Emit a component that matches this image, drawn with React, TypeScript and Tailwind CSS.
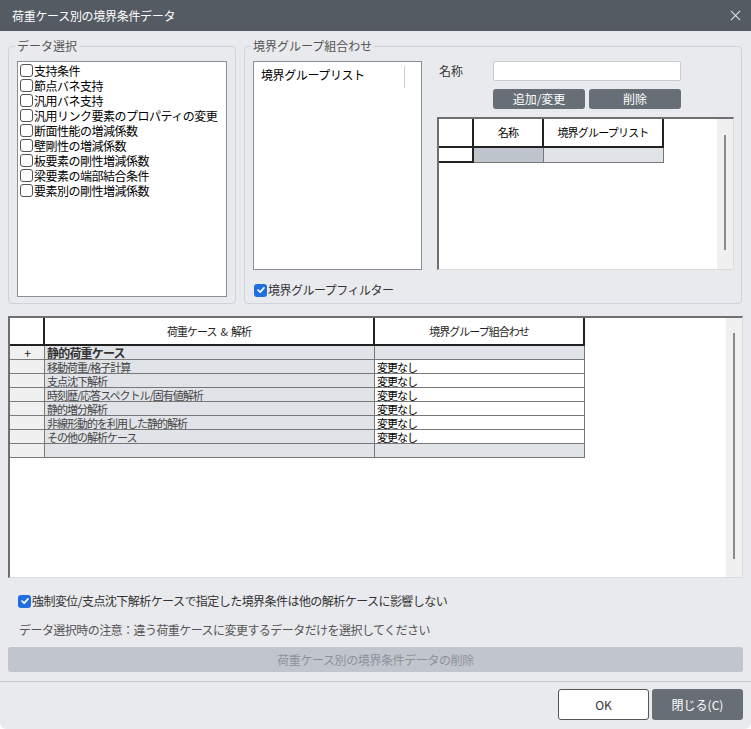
import type { ReactNode } from 'react'

const dataItems = [
  '支持条件',
  '節点バネ支持',
  '汎用バネ支持',
  '汎用リンク要素のプロパティの変更',
  '断面性能の増減係数',
  '壁剛性の増減係数',
  '板要素の剛性増減係数',
  '梁要素の端部結合条件',
  '要素別の剛性増減係数',
]

const caseRows = [
  '移動荷重/格子計算',
  '支点沈下解析',
  '時刻歴/応答スペクトル/固有値解析',
  '静的増分解析',
  '非線形動的を利用した静的解析',
  'その他の解析ケース',
]

function CheckBox({ checked = false }: { checked?: boolean }) {
  if (checked) {
    return (
      <span className="flex h-[13px] w-[13px] shrink-0 items-center justify-center rounded-[3px] bg-[#1f6fe0]">
        <svg viewBox="0 0 12 12" className="h-[10px] w-[10px]" fill="none" stroke="white" strokeWidth="2" strokeLinecap="round" strokeLinejoin="round">
          <path d="M2.5 6.2 L5 8.6 L9.6 3.4" />
        </svg>
      </span>
    )
  }
  return <span className="h-[13px] w-[13px] shrink-0 rounded-[3px] border border-[#555] bg-white" />
}

function GroupBox({ title, className, children }: { title: string; className: string; children: ReactNode }) {
  return (
    <div className={`relative rounded-[4px] border border-[#cfd2d8] ${className}`}>
      <span className="absolute -top-[9px] left-[6px] bg-[#e9eaee] px-[2px] text-[12px] leading-[16px] text-[#555]">
        {title}
      </span>
      {children}
    </div>
  )
}

function ScrollTrack({ thumbClass }: { thumbClass: string }) {
  return (
    <div className="flex w-[16px] shrink-0 justify-center bg-[#f0f0f0]">
      <div className={`w-[2px] bg-[#8a8a8a] ${thumbClass}`} />
    </div>
  )
}

function RowHead({ label = '' }: { label?: string }) {
  return (
    <div className="flex h-full w-[35px] shrink-0 items-center justify-center border-r border-b border-[#7a7a7a] bg-[#f0f0f0] text-[12px] leading-none text-[#222]">
      {label}
    </div>
  )
}

export default function App() {
  return (
    <div className="flex h-[729px] w-[751px] flex-col overflow-hidden rounded-b-[6px] bg-[#e9eaee] font-['Noto_Sans_CJK_JP',sans-serif]">
      {/* title bar */}
      <div className="flex h-[31px] shrink-0 items-center justify-between bg-[#545b63] pl-[12px] pr-[10px] text-white">
        <span className="text-[12px] tracking-[-0.3px]">荷重ケース別の境界条件データ</span>
        <svg viewBox="0 0 12 12" className="h-[11px] w-[11px]" stroke="#e6e8eb" strokeWidth="1.1">
          <path d="M1 1 L11 11 M11 1 L1 11" />
        </svg>
      </div>

      <div className="flex flex-col px-[8px]">
        {/* top group boxes */}
        <div className="mt-[15px] flex gap-[8px]">
          <GroupBox title="データ選択" className="h-[258px] w-[228px] pl-[8px] pt-[14px]">
            <div className="h-[236px] w-[210px] border border-[#8a8f96] bg-white pl-[2px] pt-[1px]">
              {dataItems.map(item => (
                <div key={item} className="flex h-[15px] items-center gap-[1px] text-[12px] tracking-[-0.5px] text-black">
                  <CheckBox />
                  <span className="whitespace-nowrap">{item}</span>
                </div>
              ))}
            </div>
          </GroupBox>

          <GroupBox title="境界グループ組合わせ" className="h-[258px] w-[498px] pl-[8px] pt-[14px]">
            <div className="flex gap-[15px]">
              <div className="h-[209px] w-[169px] border border-[#8a8f96] bg-white">
                <div className="flex h-[24px] items-start pt-[4px]">
                  <span className="w-[150px] pl-[7px] text-[12px] tracking-[-0.4px] text-black">境界グループリスト</span>
                  <span className="h-[22px] w-px bg-[#d0d0d0]" />
                </div>
              </div>

              <div className="flex w-[297px] flex-col">
                <div className="flex h-[20px] items-center">
                  <span className="w-[56px] pl-[2px] text-[12px] text-[#333]">名称</span>
                  <div className="h-[20px] w-[188px] rounded-[2px] border border-[#c8ccd2] bg-white" />
                </div>
                <div className="mt-[8px] flex gap-[4px] pl-[56px]">
                  <button className="h-[20px] w-[92px] rounded-[3px] bg-[#686e76] text-[12px] text-white">追加/変更</button>
                  <button className="h-[20px] w-[92px] rounded-[3px] bg-[#686e76] text-[12px] text-white">削除</button>
                </div>
                {/* small grid */}
                <div className="mt-[8px] flex h-[153px] border-t-2 border-l-2 border-[#6f6f6f] border-r border-b border-r-[#dcdcdc] border-b-[#dcdcdc] bg-white">
                  <div className="flex-1 text-[11px] tracking-[-0.8px] text-black">
                    <div className="flex h-[29px]">
                      <div className="w-[35px] border-r-2 border-b-2 border-[#222] bg-white" />
                      <div className="flex w-[70px] items-center justify-center border-r-2 border-b-2 border-[#222] bg-white">名称</div>
                      <div className="flex w-[120px] items-center justify-center border-r-2 border-b-2 border-[#222] bg-white">境界グループリスト</div>
                    </div>
                    <div className="flex h-[15px]">
                      <div className="w-[35px] border-r-2 border-b-2 border-[#222] bg-white" />
                      <div className="w-[70px] border-r border-b border-[#777] bg-[#bfc5cc]" />
                      <div className="w-[120px] border-r border-b border-[#777] bg-[#e0e3e7]" />
                    </div>
                  </div>
                  <ScrollTrack thumbClass="mt-[16px] h-[115px]" />
                </div>
              </div>
            </div>
            <div className="mt-[11px] flex items-center gap-[1px] pl-[1px] text-[12px] tracking-[-0.5px] text-[#333]">
              <CheckBox checked />
              <span>境界グループフィルター</span>
            </div>
          </GroupBox>
        </div>

        {/* main grid */}
        <div className="mt-[12px] flex h-[262px] border-t-2 border-l-2 border-[#6f6f6f] border-r border-b border-r-[#dcdcdc] border-b-[#dcdcdc] bg-white">
          <div className="flex-1 text-[11px] leading-[12px] tracking-[-1px] text-[#222]">
            <div className="flex h-[28px]">
              <div className="w-[35px] border-r-2 border-b-2 border-[#222] bg-white" />
              <div className="flex w-[330px] items-center justify-center gap-[4px] border-r-2 border-b-2 border-[#222] bg-white">
                <span>荷重ケース</span><span>&amp;</span><span>解析</span>
              </div>
              <div className="flex w-[210px] items-center justify-center border-r-2 border-b-2 border-[#222] bg-white">境界グループ組合わせ</div>
            </div>
            <div className="flex h-[14px]">
              <RowHead label="+" />
              <div className="flex w-[330px] items-center border-r border-b border-[#777] bg-[#e0e3e7] pl-[2px] text-[12px] leading-[12px] font-bold tracking-[-0.8px] text-[#333]">静的荷重ケース</div>
              <div className="w-[210px] border-r border-b border-[#777] bg-[#e0e3e7]" />
            </div>
            {caseRows.map(row => (
              <div key={row} className="flex h-[14px]">
                <RowHead />
                <div className="flex w-[330px] items-center border-r border-b border-[#777] bg-[#e0e3e7] pl-[2px] text-[#444]">{row}</div>
                <div className="flex w-[210px] items-center border-r border-b border-[#777] bg-white pl-[2px] text-black">変更なし</div>
              </div>
            ))}
            <div className="flex h-[14px]">
              <RowHead />
              <div className="w-[330px] border-r border-b border-[#777] bg-[#e0e3e7]" />
              <div className="w-[210px] border-r border-b border-[#777] bg-[#e0e3e7]" />
            </div>
          </div>
          <ScrollTrack thumbClass="mt-[15px] h-[226px]" />
        </div>

        <div className="mt-[14px] flex items-center gap-[1px] pl-[10px] text-[12px] tracking-[-0.55px] text-[#333]">
          <CheckBox checked />
          <span>強制変位/支点沈下解析ケースで指定した境界条件は他の解析ケースに影響しない</span>
        </div>
        <div className="mt-[11px] pl-[11px] text-[12px] tracking-[-0.55px] text-[#555]">
          データ選択時の注意：違う荷重ケースに変更するデータだけを選択してください
        </div>
        <button className="mt-[8px] h-[25px] w-full rounded-[3px] bg-[#c1c6cc] text-[12px] tracking-[-0.4px] text-[#8b9199]">
          荷重ケース別の境界条件データの削除
        </button>
      </div>

      <div className="mt-[9px] h-px w-full bg-[#c6c9ce]" />

      <div className="mt-[7px] flex justify-end gap-[3px] pr-[8px]">
        <button className="h-[31px] w-[91px] rounded-[3px] border border-[#555] bg-white text-[12px] text-[#333]">OK</button>
        <button className="h-[31px] w-[91px] rounded-[3px] bg-[#686e76] text-[12px] text-white">閉じる(C)</button>
      </div>
    </div>
  )
}
